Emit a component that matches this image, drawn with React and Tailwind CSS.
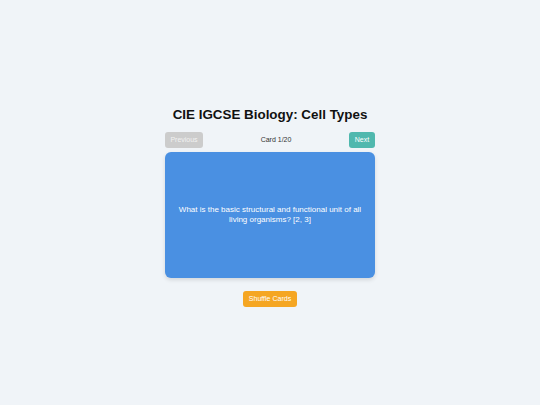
export default function App() {
  return (
    <div
      className="w-full h-screen bg-[#f0f4f8] flex flex-col items-center justify-center pt-[9px]"
      style={{ fontFamily: '"Liberation Sans", Arial, sans-serif' }}
    >
      <div className="w-[210px] flex flex-col items-center">
        <h1 className="text-[13.4px] font-bold text-[#111] text-center leading-[16px] mb-[9px] whitespace-nowrap">
          CIE IGCSE Biology: Cell Types
        </h1>
        <div className="w-full flex justify-between items-center mb-[4px]">
          <button className="h-[16px] w-[38px] rounded-[3px] bg-[#cccccc] text-[#f2f2f2] text-[7px] flex items-center justify-center">
            Previous
          </button>
          <span className="text-[7px] text-[#333]">Card 1/20</span>
          <button className="h-[16px] w-[26px] rounded-[3px] bg-[#50b8ae] text-white text-[7px] flex items-center justify-center">
            Next
          </button>
        </div>
        <div className="w-full h-[126px] rounded-[6px] bg-[#4a90e2] shadow-[0_2px_4px_rgba(0,0,0,0.12)] flex items-center justify-center px-[10px]">
          <p className="text-white text-[8px] leading-[9.8px] text-center">
            What is the basic structural and functional unit of all living organisms? [2, 3]
          </p>
        </div>
        <button className="mt-[13px] h-[16px] w-[54px] rounded-[3px] bg-[#f5a623] text-white text-[7px] flex items-center justify-center whitespace-nowrap">
          Shuffle Cards
        </button>
      </div>
    </div>
  );
}
